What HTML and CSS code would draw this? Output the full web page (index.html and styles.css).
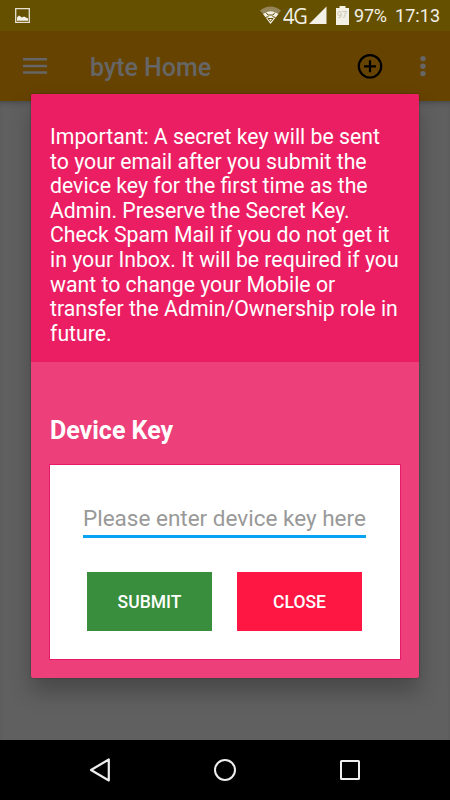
FILE: index.html
```html
<!DOCTYPE html>
<html lang="en">
<head>
<meta charset="utf-8">
<title>byte Home</title>
<link rel="stylesheet" href="styles.css">
</head>
<body>
<div class="screen">
  <header class="status">
    <svg class="picture" width="16" height="16" viewBox="0 0 16 16"><path d="M.7.7h13.600v13.600H.7z" fill="none" stroke="#e6e0d0" stroke-width="1.300"/><path d="M2 12.700V9.500l2-2 3 2 2-1 4 2v2.200z" fill="#f3f0e6"/></svg>
    <svg class="signal" width="68" height="20" viewBox="0 0 68 20">
      <path d="M0 4.500Q10.500-3.500 21 4.500L17.500 8.500Q10.500 4 3.500 8.500z" fill="#94865a"/>
      <path d="M3 8Q10.500 2.500 18.500 8L10.500 18z" fill="#f3f0e6"/>
      <path d="M6 6.500l2 2.500h5L15 6.500M5.500 11.500l3-1M15.500 11.500l-3-1M8 12.500h5l-2.500 3z" fill="none" stroke="#655000" stroke-width="1"/>
      <path d="M49 18L66.500.5V18z" fill="#f3f0e6"/>
    </svg>
    <span class="network">4G</span>
    <span class="battery"><svg width="13" height="19" viewBox="0 0 13 19"><path d="M0 2h3.500V0h6v2H13v17H0z" fill="#f3f0e6"/></svg><small>97</small></span>
    <span class="percent">97%</span>
    <time>17:13</time>
  </header>
  <div class="toolbar">
    <svg class="menu" width="24" height="18" viewBox="0 0 24 18"><path d="M0 2.300h24M0 9h24M0 15.600h24" stroke="#666" stroke-width="2.500"/></svg>
    <h1>byte Home</h1>
    <svg class="add" width="26" height="26" viewBox="0 0 26 26"><g fill="none" stroke="#000" stroke-width="2.200"><circle cx="13" cy="13.300" r="11.200"/><path d="M13 7.300v12M7 13.300h12"/></g></svg>
    <svg class="more" width="6" height="22" viewBox="0 0 6 22"><g fill="#666"><circle cx="3" cy="3.600" r="2.700"/><circle cx="3" cy="11.200" r="2.700"/><circle cx="3" cy="18.600" r="2.700"/></g></svg>
  </div>
  <main class="content">
    <section class="dialog">
      <p class="notice">Important: A secret key will be sent<br>to your email after you submit the<br>device key for the first time as the<br>Admin. Preserve the Secret Key.<br>Check Spam Mail if you do not get it<br>in your Inbox. It will be required if you<br>want to change your Mobile or<br>transfer the Admin/Ownership role in<br>future.</p>
      <div class="form">
        <h2>Device Key</h2>
        <div class="panel">
          <div class="field">Please enter device key here</div>
          <div class="actions">
            <button class="submit">SUBMIT</button>
            <button class="close">CLOSE</button>
          </div>
        </div>
      </div>
    </section>
  </main>
  <nav class="navbar">
    <svg width="24" height="26" viewBox="0 0 24 26"><path d="M20.800 2.500v21L3 13z" fill="none" stroke="#eee" stroke-width="2.200" stroke-linejoin="round"/></svg>
    <svg width="24" height="26" viewBox="0 0 24 26"><circle cx="12" cy="13" r="10" fill="none" stroke="#eee" stroke-width="2"/></svg>
    <svg width="24" height="26" viewBox="0 0 24 26"><rect x="3" y="4" width="18" height="18" rx=".5" fill="none" stroke="#eee" stroke-width="2"/></svg>
  </nav>
</div>
</body>
</html>
```
FILE: styles.css
```css
* { box-sizing: border-box; }
body { margin: 0; font-family: Roboto, sans-serif; }
h1, h2, p { margin: 0; font-size: inherit; }
svg { display: block; flex: none; }
.screen { width: 450px; height: 800px; display: flex; flex-direction: column; overflow: hidden; background: #606060; }
.status { height: 31px; flex: none; display: flex; align-items: flex-start; background: #655000; color: #f3f0e6; white-space: nowrap; }
.picture { margin: 8px 0 0 15px; }
.signal { margin: 6px 0 0 229px; }
.network { width: 24px; margin: 4px 0 0 -45px; font: 21px/24px "Open Sans", sans-serif; letter-spacing: -1.2px; transform: scaleX(.95); transform-origin: left; }
.battery { position: relative; margin: 6px 0 0 29px; }
.battery small { position: absolute; left: 1px; top: 4px; font: 9px/11px Roboto, sans-serif; color: #c9c4ae; }
.percent { width: 35px; margin: 5px 0 0 5px; font-size: 18px; line-height: 22px; letter-spacing: -.2px; }
time { margin: 5px 0 0 6px; font-size: 18px; line-height: 22px; letter-spacing: .05px; }
.toolbar { height: 70px; flex: none; display: flex; align-items: center; background: #664300; }
.menu { margin-left: 23px; }
.toolbar h1 { width: 123px; margin: 3px 0 0 43px; font-size: 25px; line-height: 30px; font-weight: 500; color: #666; white-space: nowrap; }
.add { margin-left: 144px; }
.more { margin-left: 36.500px; }
.content { flex: 1; min-height: 0; box-shadow: inset 0 5px 6px -4px rgba(0,0,0,.3); }
.dialog { position: relative; width: 387.500px; height: 584px; margin: -7px 0 0 31px; border-radius: 2px; overflow: hidden; background: #ed407a; box-shadow: 0 0 2px rgba(0,0,0,.4), 0 14px 22px rgba(0,0,0,.25); }
.notice { height: 268px; padding: 31px 0 0 19px; background: #eb1e63; color: #fff; font-size: 21.250px; line-height: 24.600px; white-space: nowrap; }
.form { padding: 54px 18.500px 0 19px; }
.form h2 { color: #fff; font-size: 25px; line-height: 30px; font-weight: 700; }
.panel { height: 194px; margin-top: 19px; padding: 39px 33px 0; background: #fff; box-shadow: 0 0 0 1px #e8186a; }
.field { width: 283px; height: 34px; border-bottom: 3px solid #08a4f4; color: #999; font-size: 22.500px; line-height: 29px; white-space: nowrap; }
.actions { display: flex; gap: 25px; padding: 34px 4px 0; }
.actions button { width: 125px; height: 59px; padding: 1px 0 0; border: 0; color: #fff; font: 500 17.500px Roboto, sans-serif; }
.submit { background: #388e3c; }
.close { background: #ff1744; }
.navbar { height: 60px; flex: none; padding: 0 88px; display: flex; align-items: center; justify-content: space-between; background: #000; }
```
